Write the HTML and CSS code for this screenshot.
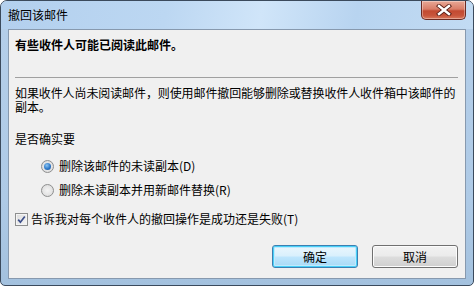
FILE: index.html
```html
<!DOCTYPE html>
<html lang="zh-CN">
<head>
<meta charset="utf-8">
<title>撤回该邮件</title>
<link rel="stylesheet" href="styles.css">
</head>
<body>
<div class="window">
  <div class="titlebar">
    <span class="title">撤回该邮件</span>
    <div class="close">
      <svg width="16" height="12" viewBox="0 0 16 12">
        <path d="M3 2 L13 10 M13 2 L3 10" stroke="#5a2018" stroke-width="4.2" stroke-linecap="square"/>
        <path d="M3 2 L13 10 M13 2 L3 10" stroke="#ffffff" stroke-width="2.4" stroke-linecap="square"/>
      </svg>
    </div>
  </div>
  <div class="content">
    <div class="header">有些收件人可能已阅读此邮件。</div>
    <div class="sep"></div>
    <p class="desc">如果收件人尚未阅读邮件，则使用邮件撤回能够删除或替换收件人收件箱中该邮件的<br>副本。</p>
    <p class="question">是否确实要</p>
    <div class="options">
      <div class="opt"><span class="radio checked"></span><span>删除该邮件的未读副本(D)</span></div>
      <div class="opt opt2"><span class="radio"></span><span>删除未读副本并用新邮件替换(R)</span></div>
    </div>
    <div class="check-row">
      <span class="checkbox">
        <svg width="9" height="9" viewBox="0 0 9 9"><path d="M1.2 4.6 L3.4 7.2 L7.8 1.4" fill="none" stroke="#3d4f8a" stroke-width="1.7"/></svg>
      </span>
      <span>告诉我对每个收件人的撤回操作是成功还是失败(T)</span>
    </div>
    <div class="buttons">
      <button class="btn default">确定</button>
      <button class="btn">取消</button>
    </div>
  </div>
</div>
</body>
</html>
```

FILE: styles.css
```css
html, body {
  margin: 0;
  padding: 0;
  background: #ffffff;
}
body {
  font-family: "Noto Sans CJK SC", "Microsoft YaHei", sans-serif;
  font-size: 12px;
  color: #000;
}
.window {
  box-sizing: border-box;
  width: 474px;
  height: 286px;
  border: 1px solid #3b4a5c;
  border-radius: 7px 7px 5px 5px;
  background: linear-gradient(to bottom, #bcd5ee 0px, #b4cee9 30px, #aecae6 200px, #a3c1de 286px);
  display: flex;
  flex-direction: column;
  overflow: hidden;
  position: relative;
}
.titlebar {
  height: 28px;
  display: flex;
  align-items: flex-start;
  padding: 0 7px 0 7px;
  background: linear-gradient(100deg, #b3d0ee 0%, #bcd7f2 35%, #d0e5f9 55%, #b8d4f0 75%, #c2dbf3 100%);
  box-sizing: border-box;
}
.title {
  line-height: 16px;
  margin-top: 6px;
  color: #000;
}
.close {
  margin-left: auto;
  width: 45px;
  height: 19px;
  box-sizing: border-box;
  border: 1px solid #6b2a22;
  border-top: none;
  border-radius: 0 0 5px 5px;
  background: linear-gradient(to bottom, #e8a896 0%, #d97d68 45%, #c24a31 55%, #c8553b 80%, #d9785c 100%);
  display: flex;
  align-items: center;
  justify-content: center;
  box-shadow: inset 0 0 0 1px rgba(255,255,255,0.35);
}
.close svg { display: block; }
.content {
  box-sizing: border-box;
  margin: 0 7px;
  height: 250px;
  border: 1px solid #8799ae;
  background: #f0f0f0;
  padding: 0 7px 0 6px;
  display: flex;
  flex-direction: column;
}
.header {
  height: 47px;
  box-sizing: border-box;
  padding-top: 7px;
  line-height: 16px;
  font-weight: bold;
}
.sep {
  height: 1px;
  background: #a0a0a0;
}
.desc {
  margin: 8px 0 0 0;
  line-height: 14px;
  letter-spacing: -0.1px;
  white-space: nowrap;
}
.question {
  margin: 18px 0 0 0;
  line-height: 14px;
}
.options {
  margin-top: 12px;
  padding-left: 26px;
  display: flex;
  flex-direction: column;
  gap: 8px;
}
.opt {
  display: flex;
  align-items: center;
  height: 16px;
  line-height: 16px;
  gap: 5px;
}
.radio {
  width: 13px;
  height: 13px;
  box-sizing: border-box;
  border-radius: 50%;
  border: 1px solid #8e8f8f;
  background: radial-gradient(circle at 50% 50%, #f4f4f4 0%, #e3e3e3 60%, #d2d2d2 100%);
  position: relative;
  flex: none;
}
.radio.checked::after {
  content: "";
  position: absolute;
  left: 2px;
  top: 2px;
  width: 7px;
  height: 7px;
  border-radius: 50%;
  background: radial-gradient(circle at 40% 35%, #8cc4f2 0%, #2e79c8 55%, #1a4f93 100%);
}
.check-row {
  margin-top: 13px;
  display: flex;
  align-items: center;
  height: 16px;
  line-height: 16px;
  gap: 3px;
}
.checkbox {
  width: 13px;
  height: 13px;
  box-sizing: border-box;
  border: 1px solid #8e8f8f;
  background: linear-gradient(135deg, #dcdcdc 0%, #f6f6f6 100%);
  display: flex;
  align-items: center;
  justify-content: center;
  flex: none;
  box-shadow: inset 0 0 0 1px #f4f4f4;
}
.checkbox svg { display: block; }
.buttons {
  margin-top: 18px;
  display: flex;
  justify-content: flex-end;
  gap: 14px;
}
.btn {
  width: 86px;
  height: 23px;
  box-sizing: border-box;
  font-family: inherit;
  font-size: 12px;
  color: #000;
  padding: 0;
  line-height: 20px;
  border: 1px solid #707070;
  border-radius: 3px;
  background: linear-gradient(to bottom, #f2f2f2 0%, #ebebeb 48%, #dddddd 52%, #cfcfcf 100%);
  box-shadow: inset 0 0 0 1px #fcfcfc;
}
.btn.default {
  border-color: #3c7fb1;
  background: linear-gradient(to bottom, #eaf6fd 0%, #d9f0fc 48%, #bee6fd 52%, #a7d9f5 100%);
  box-shadow: inset 0 0 0 1px #48d0f8, inset 0 0 0 2px #c0eafd;
}
```
